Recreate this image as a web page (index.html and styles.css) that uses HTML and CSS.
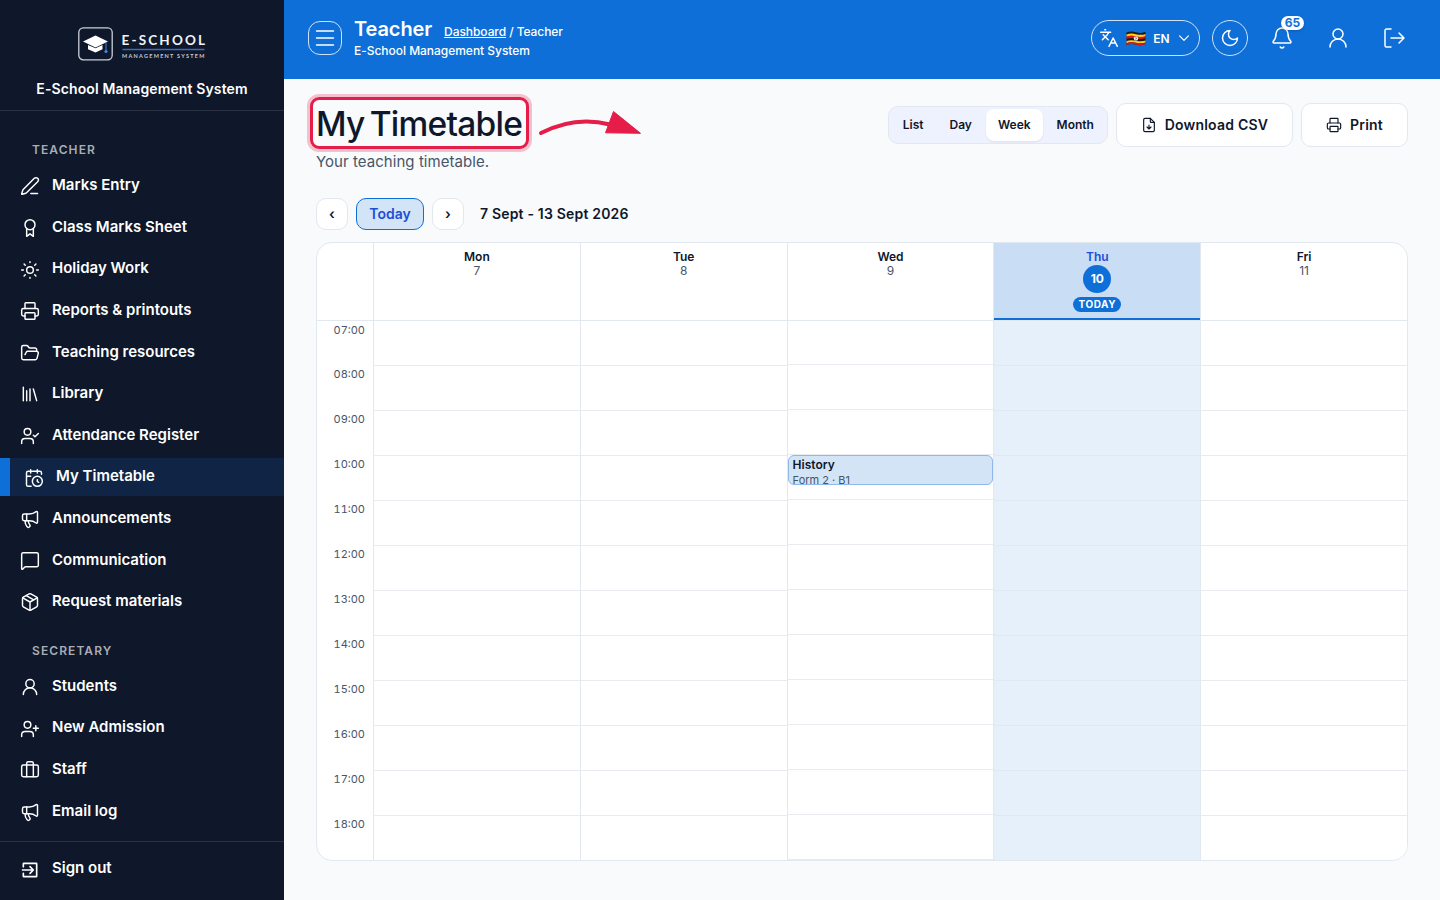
FILE: index.html
```html
<!DOCTYPE html>
<html lang="en">
<head>
    <meta charset="UTF-8">
    <meta name="viewport" content="width=device-width, initial-scale=1.0">
    <title>My Timetable - E-School Management System</title>
    <link rel="stylesheet" href="styles.css">
</head>
<body>
    <aside class="sidebar">
        <div class="brand">
            <svg class="brand-logo" viewBox="0 0 130 36">
                <rect x="1.8" y="1.8" width="33.4" height="32" rx="4.5" fill="none" stroke="#cbd0d8" stroke-width="1.3"/>
                <path d="M6 15.5 18.5 9.5l12.5 6-12.5 6z" fill="#fff"/>
                <path d="M11 19v4.200l7.5 3.300 7-3.300V19l-7 3.300z" fill="#fff"/>
                <path d="M29 16.5v8.5" stroke="#4683e8" stroke-width="1"/>
                <circle cx="29" cy="25.5" r="1.6" fill="#4683e8"/>
                <text x="44.6" y="19" class="logo-name" textLength="83.5">E-SCHOOL</text>
                <path d="M45.5 23.5h82" stroke="#3f6bb8" stroke-width="1.5"/>
                <text x="45" y="32" class="logo-sub" textLength="82.5">MANAGEMENT SYSTEM</text>
            </svg>
            <div class="brand-title">E-School Management System</div>
        </div>
        <nav class="nav">
            <div class="nav-label">Teacher</div>
            <a class="nav-item"><svg class="icon" viewBox="0 0 24 24"><path d="M13 21h8"/><path d="M21.174 6.812a1 1 0 0 0-3.986-3.987L3.842 16.174a2 2 0 0 0-.5.830l-1.321 4.352a.5.5 0 0 0 .623.622l4.353-1.320a2 2 0 0 0 .830-.497z"/></svg>Marks Entry</a>
            <a class="nav-item"><svg class="icon" viewBox="0 0 24 24"><circle cx="12" cy="8" r="6"/><path d="M8 13v9l4-3 4 3v-9"/></svg>Class Marks Sheet</a>
            <a class="nav-item"><svg class="icon" viewBox="0 0 24 24"><circle cx="12" cy="12" r="4"/><path d="M12 2v1M12 21v1M2 12h2M20 12h2M4.900 4.900l1.400 1.400M17.700 17.700l1.400 1.400M6.300 17.700l-1.400 1.400M19.100 4.900l-1.400 1.400"/></svg>Holiday Work</a>
            <a class="nav-item"><svg class="icon" viewBox="0 0 24 24"><path d="M6 18H4a2 2 0 0 1-2-2v-5a2 2 0 0 1 2-2h16a2 2 0 0 1 2 2v5a2 2 0 0 1-2 2h-2"/><path d="M6 9V3a1 1 0 0 1 1-1h10a1 1 0 0 1 1 1v6"/><rect x="6" y="14" width="12" height="8" rx="1"/></svg>Reports &amp; printouts</a>
            <a class="nav-item"><svg class="icon" viewBox="0 0 24 24"><path d="M6 14l1.500-2.900A2 2 0 0 1 9.240 10H20a2 2 0 0 1 1.940 2.500l-1.540 6a2 2 0 0 1-1.950 1.500H4a2 2 0 0 1-2-2V5a2 2 0 0 1 2-2h3.900a2 2 0 0 1 1.690.9l.810 1.200a2 2 0 0 0 1.670.9H18a2 2 0 0 1 2 2v2"/></svg>Teaching resources</a>
            <a class="nav-item"><svg class="icon" viewBox="0 0 24 24"><path d="M16 6l4 14M12 6v14M8 8v12M4 4v16"/></svg>Library</a>
            <a class="nav-item"><svg class="icon" viewBox="0 0 24 24"><path d="M16 11l2 2 4-4"/><path d="M16 21v-2a4 4 0 0 0-4-4H6a4 4 0 0 0-4 4v2"/><circle cx="9" cy="7" r="4"/></svg>Attendance Register</a>
            <a class="nav-item active"><svg class="icon" viewBox="0 0 24 24"><path d="M16 14v2.200l1.600 1M16 2v4M21 7.500V6a2 2 0 0 0-2-2H5a2 2 0 0 0-2 2v14a2 2 0 0 0 2 2h3.500M3 10h5M8 2v4"/><circle cx="16" cy="16" r="6"/></svg>My Timetable</a>
            <a class="nav-item"><svg class="icon" viewBox="0 0 24 24"><path d="M11 6a13 13 0 0 0 8.400-2.800A1 1 0 0 1 21 4v12a1 1 0 0 1-1.600.8A13 13 0 0 0 11 14H5a2 2 0 0 1-2-2V8a2 2 0 0 1 2-2z"/><path d="M6 14a12 12 0 0 0 2.400 7.200 2 2 0 0 0 3.200-2.400A8 8 0 0 1 10 14M8 6v8"/></svg>Announcements</a>
            <a class="nav-item"><svg class="icon" viewBox="0 0 24 24"><path d="M22 17a2 2 0 0 1-2 2H6.830a2 2 0 0 0-1.414.586l-2.202 2.202A.710.710 0 0 1 2 21.286V4a2 2 0 0 1 2-2h16a2 2 0 0 1 2 2z"/></svg>Communication</a>
            <a class="nav-item"><svg class="icon" viewBox="0 0 24 24"><path d="M11 21.730a2 2 0 0 0 2 0l7-4A2 2 0 0 0 21 16V8a2 2 0 0 0-1-1.730l-7-4a2 2 0 0 0-2 0l-7 4A2 2 0 0 0 3 8v8a2 2 0 0 0 1 1.730z"/><path d="M12 22V12M3.300 7 12 12l8.700-5M7.500 4.270l9 5.150"/></svg>Request materials</a>
            <div class="nav-label">Secretary</div>
            <a class="nav-item"><svg class="icon" viewBox="0 0 24 24"><circle cx="12" cy="8" r="5"/><path d="M20 21a8 8 0 0 0-16 0"/></svg>Students</a>
            <a class="nav-item"><svg class="icon" viewBox="0 0 24 24"><path d="M16 21v-2a4 4 0 0 0-4-4H6a4 4 0 0 0-4 4v2M19 8v6M22 11h-6"/><circle cx="9" cy="7" r="4"/></svg>New Admission</a>
            <a class="nav-item"><svg class="icon" viewBox="0 0 24 24"><path d="M16 20V4a2 2 0 0 0-2-2h-4a2 2 0 0 0-2 2v16"/><rect x="2" y="6" width="20" height="14" rx="2"/></svg>Staff</a>
            <a class="nav-item"><svg class="icon" viewBox="0 0 24 24"><path d="M11 6a13 13 0 0 0 8.400-2.800A1 1 0 0 1 21 4v12a1 1 0 0 1-1.600.8A13 13 0 0 0 11 14H5a2 2 0 0 1-2-2V8a2 2 0 0 1 2-2z"/><path d="M6 14a12 12 0 0 0 2.400 7.200 2 2 0 0 0 3.200-2.400A8 8 0 0 1 10 14M8 6v8"/></svg>Email log</a>
        </nav>
        <div class="sidebar-footer">
            <a class="nav-item"><svg class="icon icon-bold" viewBox="0 0 24 24"><path d="M4 8V4.500A.5.5 0 0 1 4.500 4h15a.5.5 0 0 1 .5.5v15a.5.5 0 0 1-.5.5h-15a.5.5 0 0 1-.5-.5V16M3 12h12M12 8l4 4-4 4"/></svg>Sign out</a>
        </div>
    </aside>

    <div class="page">
        <header class="topbar">
            <button class="menu-btn"><svg class="icon" viewBox="0 0 24 24"><path d="M3.500 5h17M3.500 12h17M3.500 19h17"/></svg></button>
            <div class="heading">
                <div class="heading-row">
                    <span class="heading-title">Teacher</span>
                    <span class="crumbs"><a>Dashboard</a> / Teacher</span>
                </div>
                <div class="heading-sub">E-School Management System</div>
            </div>
            <div class="tools">
                <button class="lang">
                    <svg class="icon" viewBox="0 0 24 24"><path d="M5 8l6 6M4 14l6-6 2-3M2 5h12M7 2h1M22 22l-5-10-5 10M14 18h6"/></svg>
                    <svg class="flag" viewBox="0 0 20 15">
                        <clipPath id="wave"><path d="M.5 1.500Q5-.5 10 1.200T19.500.8V13Q15 15 10 13.600T.5 14z"/></clipPath>
                        <g clip-path="url(#wave)">
                            <path fill="#1b1b1b" d="M0 0h20v15H0z"/>
                            <path fill="#fcd116" d="M0 3.800Q5 1.800 10 3.200T20 3v2.200Q15 7 10 5.400T0 5.800zM0 10.200Q5 8.400 10 9.700T20 9.500v2Q15 13 10 11.800T0 12.200z"/>
                            <path fill="#e0141c" d="M0 5.800Q5 3.800 10 5.300T20 5v2Q15 8.800 10 7.600T0 8zM0 12.200Q5 10.500 10 11.800T20 11.500V15H0z"/>
                        </g>
                        <circle cx="10" cy="7.4" r="2.2" fill="#eee"/>
                        <path d="M9.300 6l1.200 1-.8 1.500" fill="none" stroke="#555" stroke-width=".8"/>
                    </svg>
                    <span>EN</span>
                    <svg class="icon chevron" viewBox="0 0 24 24"><path d="M4.500 8.500l7.500 7.500 7.500-7.500"/></svg>
                </button>
                <button class="theme-btn"><svg class="icon" viewBox="0 0 24 24"><path d="M12 3a6 6 0 0 0 9 9 9 9 0 1 1-9-9Z"/></svg></button>
                <button class="tool-btn">
                    <svg class="icon" viewBox="0 0 24 24"><path d="M10.268 21a2 2 0 0 0 3.464 0M3.262 15.326A1 1 0 0 0 4 17h16a1 1 0 0 0 .740-1.673C19.410 13.956 18 12.499 18 8A6 6 0 0 0 6 8c0 4.499-1.411 5.956-2.738 7.326"/></svg>
                    <span class="badge">65</span>
                </button>
                <button class="tool-btn"><svg class="icon" viewBox="0 0 24 24"><circle cx="12" cy="8" r="5"/><path d="M20 21a8 8 0 0 0-16 0"/></svg></button>
                <button class="tool-btn"><svg class="icon" viewBox="0 0 24 24"><path d="M9 21H4.500A1.500 1.500 0 0 1 3 19.500v-15A1.500 1.500 0 0 1 4.500 3H9M9 12h12.500M17 7l5 5-5 5"/></svg></button>
            </div>
        </header>

        <main class="content">
            <div class="title-row">
                <div class="title-block">
                    <h1>My Timetable</h1>
                    <div class="title-mark"></div>
                    <svg class="title-arrow" viewBox="0 0 110 30">
                        <path d="M5 22Q39 4.500 74 13.500" fill="none" stroke="#e51d48" stroke-width="4" stroke-linecap="round"/>
                        <path d="M77.500 .5 104.500 22.300 69.500 21.800z" fill="#e51d48" stroke="#e51d48" stroke-linejoin="round"/>
                    </svg>
                    <p>Your teaching timetable.</p>
                </div>
                <div class="actions">
                    <div class="views">
                        <button>List</button>
                        <button>Day</button>
                        <button class="selected">Week</button>
                        <button>Month</button>
                    </div>
                    <button class="btn"><svg class="icon" viewBox="0 0 24 24"><path d="M6 22a2 2 0 0 1-2-2V4a2 2 0 0 1 2-2h8l6 6v12a2 2 0 0 1-2 2z"/><path d="M14 2v5a1 1 0 0 0 1 1h5M12 18v-6M9 15l3 3 3-3"/></svg>Download CSV</button>
                    <button class="btn"><svg class="icon" viewBox="0 0 24 24"><path d="M6 18H4a2 2 0 0 1-2-2v-5a2 2 0 0 1 2-2h16a2 2 0 0 1 2 2v5a2 2 0 0 1-2 2h-2"/><path d="M6 9V3a1 1 0 0 1 1-1h10a1 1 0 0 1 1 1v6"/><rect x="6" y="14" width="12" height="8" rx="1"/></svg>Print</button>
                </div>
            </div>

            <div class="week-nav">
                <button>‹</button>
                <button class="today-btn">Today</button>
                <button>›</button>
                <span class="range">7 Sept - 13 Sept 2026</span>
            </div>

            <div class="calendar">
                <div class="cal-head">
                    <div></div>
                    <div class="day-head">Mon<span>7</span></div>
                    <div class="day-head">Tue<span>8</span></div>
                    <div class="day-head">Wed<span>9</span></div>
                    <div class="day-head today">Thu<span class="num">10</span><span class="pill">TODAY</span></div>
                    <div class="day-head">Fri<span>11</span></div>
                </div>
                <div class="cal-body">
                    <div class="times">
                        <div>07:00</div><div>08:00</div><div>09:00</div><div>10:00</div><div>11:00</div><div>12:00</div>
                        <div>13:00</div><div>14:00</div><div>15:00</div><div>16:00</div><div>17:00</div><div>18:00</div>
                    </div>
                    <div class="day-col"></div>
                    <div class="day-col"></div>
                    <div class="day-col has-event">
                        <div class="event"><strong>History</strong><span>Form 2 · B1</span></div>
                    </div>
                    <div class="day-col today"></div>
                    <div class="day-col"></div>
                </div>
            </div>
        </main>
    </div>
</body>
</html>
```
FILE: styles.css
```css
* {
    box-sizing: border-box;
}
body {
    font-family: Inter, "Liberation Sans", sans-serif;
    display: flex;
    height: 900px;
    margin: 0;
    overflow: hidden;
    background: #f8fafc;
    color: #0f172a;
}
button {
    font: inherit;
    color: inherit;
    background: none;
    border: none;
    padding: 0;
    display: flex;
    align-items: center;
    justify-content: center;
}
.icon {
    width: 20px;
    height: 20px;
    flex: none;
    fill: none;
    stroke: currentColor;
    stroke-width: 1.75;
    stroke-linecap: round;
    stroke-linejoin: round;
}

/* sidebar */
.sidebar {
    width: 284px;
    flex: none;
    display: flex;
    flex-direction: column;
    background: #0f172a;
    color: #fff;
}
.brand {
    height: 111px;
    padding-top: 26px;
    display: flex;
    flex-direction: column;
    align-items: center;
    border-bottom: 1px solid #293142;
}
.brand-logo {
    width: 130px;
    height: 36px;
}
.logo-name {
    font: 700 13.5px Lato, sans-serif;
    fill: #f1f3f6;
}
.logo-sub {
    font: 700 5.5px Lato, sans-serif;
    fill: #c5cad3;
}
.brand-title {
    margin-top: 18px;
    font-size: 14px;
    line-height: 18px;
    font-weight: 600;
    letter-spacing: .12px;
}
.nav {
    height: 730px;
    padding-top: 17px;
    display: flex;
    flex-direction: column;
    gap: 4px;
}
.nav-label {
    height: 34.8px;
    padding: 14px 32px 0;
    font-size: 12px;
    line-height: 16px;
    font-weight: 600;
    letter-spacing: 1.08px;
    text-transform: uppercase;
    color: #a9adb5;
}
.nav-item + .nav-label {
    height: 39px;
    padding-top: 19px;
}
.nav-item {
    height: 37.6px;
    flex: none;
    padding: 0 20px 1.8px;
    display: flex;
    align-items: center;
    gap: 12px;
    font-size: 15px;
    font-weight: 600;
}
.nav-item .icon {
    position: relative;
    top: 1.7px;
}
.nav-item.active {
    padding-left: 14px;
    border-left: 10px solid #0f6fd8;
    background: #102545;
}
.icon-bold {
    stroke-width: 2;
}
.sidebar-footer {
    flex: 1;
    padding-top: 8px;
    border-top: 1px solid #293142;
}

/* top bar */
.page {
    flex: 1;
    min-width: 0;
}
.topbar {
    height: 79px;
    padding: 0 28px 3px 24px;
    display: flex;
    align-items: center;
    background: #0f6fd8;
    color: #fff;
}
.menu-btn {
    width: 34px;
    height: 34px;
    border: 1px solid #cfe2f7;
    border-radius: 12px;
}
.menu-btn .icon {
    width: 24px;
    height: 24px;
    stroke-width: 1.5;
}
.heading {
    margin-left: 12px;
    padding-top: 3px;
}
.heading-row {
    display: flex;
    align-items: baseline;
    gap: 12px;
    line-height: 25px;
}
.heading-title {
    font-size: 20px;
    font-weight: 600;
    letter-spacing: -.1px;
}
.crumbs {
    font-size: 12px;
    font-weight: 500;
    letter-spacing: -.07px;
}
.crumbs a {
    text-decoration: underline;
}
.heading-sub {
    margin: -2px 0 3px;
    font-size: 12px;
    line-height: 18px;
    font-weight: 500;
    letter-spacing: -.03px;
}
.tools {
    margin-left: auto;
    display: flex;
    align-items: center;
}
.lang {
    width: 109px;
    height: 36px;
    padding-right: 1px;
    gap: 7px;
    border: 1px solid #cfe2f7;
    border-radius: 18px;
    font-size: 12px;
    font-weight: 600;
}
.flag {
    width: 20px;
    height: 15px;
}
.chevron {
    width: 14px;
    height: 14px;
    stroke-width: 2;
}
.theme-btn {
    width: 36px;
    height: 36px;
    margin: 0 16px 0 12px;
    border: 1px solid #cfe2f7;
    border-radius: 50%;
}
.tool-btn {
    width: 36px;
    height: 36px;
    position: relative;
}
.tool-btn + .tool-btn {
    margin-left: 20px;
}
.tool-btn .icon {
    width: 24px;
    height: 24px;
    stroke-width: 1.5;
}
.badge {
    position: absolute;
    left: 17px;
    top: -4px;
    width: 23px;
    height: 14px;
    border-radius: 7px;
    background: #fff;
    color: #0f6fd8;
    font-size: 12px;
    line-height: 14px;
    font-weight: 700;
    text-align: center;
    box-shadow: 0 1px 3px rgba(0, 0, 0, .2);
}

/* page title */
.content {
    padding: 24px 32px 0;
}
.title-row {
    display: flex;
    justify-content: space-between;
    height: 95px;
}
.title-block {
    position: relative;
}
h1 {
    margin: 0;
    font-size: 33.5px;
    line-height: 43px;
    font-weight: 550;
    letter-spacing: -.75px;
    word-spacing: -3px;
    white-space: nowrap;
}
.title-block p {
    margin: 4px 0 0;
    font-size: 15px;
    line-height: 24px;
    letter-spacing: .05px;
    color: #475569;
}
.title-mark {
    position: absolute;
    left: -6px;
    top: -6px;
    width: 219px;
    height: 52px;
    border: 3px solid #e51d48;
    border-radius: 9px;
    box-shadow: 0 0 0 3px rgba(229, 29, 72, .25);
}
.title-arrow {
    position: absolute;
    left: 220px;
    top: 8px;
    width: 110px;
    height: 30px;
}
.actions {
    display: flex;
    align-items: center;
    gap: 8px;
    height: 44px;
}
.views {
    display: flex;
    gap: 2px;
    width: 220px;
    height: 38px;
    padding: 2px;
    border: 1px solid #e2e8f0;
    border-radius: 10px;
    background: #eef2ff;
    font-size: 12px;
    font-weight: 600;
}
.views button {
    padding: 0 12px 1px;
    border-radius: 8px;
}
.views .selected {
    background: #fff;
    box-shadow: 0 1px 2px rgba(15, 23, 42, .08);
}
.btn {
    height: 44px;
    padding: 0 24px 1px;
    gap: 8px;
    border: 1px solid #e2e8f0;
    border-radius: 10px;
    background: #fff;
    font-size: 14px;
    font-weight: 600;
    letter-spacing: .2px;
}
.btn .icon {
    width: 16px;
    height: 16px;
}

/* week navigation */
.week-nav {
    display: flex;
    align-items: center;
    gap: 8px;
    height: 32px;
    font-size: 14px;
    font-weight: 600;
}
.week-nav button {
    width: 32px;
    height: 32px;
    padding-bottom: 1px;
    border: 1px solid #e2e8f0;
    border-radius: 10px;
    background: #fff;
}
.week-nav .today-btn {
    width: 68px;
    border-color: #0f6fd8;
    background: #d3e4f6;
    color: #1d4ed8;
}
.range {
    margin-left: 8px;
    padding-bottom: 1px;
    letter-spacing: .18px;
}

/* calendar */
.calendar {
    margin-top: 12px;
    height: 619px;
    border: 1px solid #e2e8f0;
    border-radius: 16px;
    background: #fff;
    overflow: hidden;
}
.cal-head,
.cal-body {
    display: grid;
    grid-template-columns: 56px repeat(5, 1fr);
}
.cal-head {
    height: 78px;
    border-bottom: 1px solid #e2e8f0;
}
.day-head {
    padding-top: 7px;
    display: flex;
    flex-direction: column;
    align-items: center;
    border-left: 1px solid #e2e8f0;
    font-size: 12px;
    line-height: 14px;
    font-weight: 600;
}
.day-head span {
    font-weight: 400;
    color: #475569;
}
.day-head.today {
    background: #c9ddf5;
    box-shadow: inset 0 -2px #0f6fd8;
    color: #1d4ed8;
}
.day-head .num {
    width: 28px;
    height: 28px;
    margin-top: 1px;
    border-radius: 50%;
    background: #0f6fd8;
    color: #fff;
    line-height: 28px;
    font-weight: 700;
    text-align: center;
}
.day-head .pill {
    width: 48px;
    height: 15px;
    margin-top: 4px;
    border-radius: 8px;
    background: #0f6fd8;
    color: #fff;
    font-size: 10px;
    line-height: 15px;
    font-weight: 700;
    letter-spacing: .5px;
    text-align: center;
}
.times {
    font-size: 11px;
    line-height: 14px;
    font-variant-numeric: tabular-nums;
    color: #475569;
    text-align: right;
}
.times div {
    height: 45px;
    padding: 1.5px 8px 0 0;
}
.times div:first-child {
    height: 44px;
}
.day-col {
    height: 540px;
    border-left: 1px solid #e2e8f0;
    background: repeating-linear-gradient(#fff 0 44px, #e8ecf1 44px 45px);
}
.day-col.has-event {
    background-position: 0 -1px;
    background-size: 100% 45px;
}
.day-col.today {
    background: repeating-linear-gradient(#e6f0fa 0 44px, #dfe9f3 44px 45px);
}
.event {
    margin-top: 134px;
    height: 30px;
    padding: 1px 4px;
    overflow: hidden;
    border: 1px solid #8fb9e8;
    border-radius: 6px;
    background: #d3e4f6;
    font-size: 12px;
    line-height: 15px;
}
.event strong,
.event span {
    display: block;
    font-weight: 600;
}
.event span {
    margin-top: 1px;
    font-size: 11px;
    font-weight: 400;
    color: #475569;
}
```
